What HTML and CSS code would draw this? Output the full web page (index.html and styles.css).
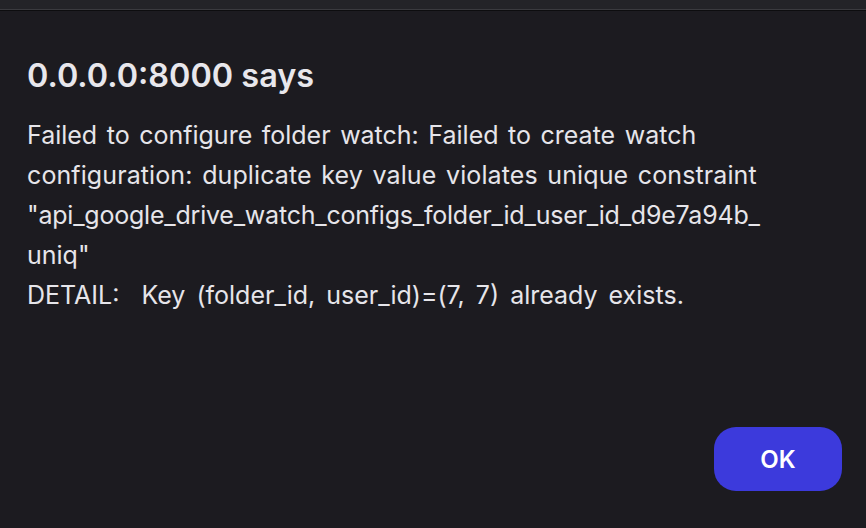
FILE: index.html
```html
<!DOCTYPE html>
<html>
<head>
<meta charset="utf-8">
<link rel="stylesheet" href="styles.css">
</head>
<body>
<div class="topbar"></div>
<div class="dialog">
  <h1 class="title">0.0.0.0:8000 says</h1>
  <p class="message">Failed to configure folder watch: Failed to create watch<br><span class="wide">configuration: duplicate key value violates unique constraint</span><br><span class="ident">"api_google_drive_watch_configs_folder_id_user_id_d9e7a94b_</span><br>uniq"<br><span class="detail">DETAIL:&nbsp; Key (folder_id, user_id)=(7, 7) already exists.</span></p>
  <div class="actions">
    <button class="ok">OK</button>
  </div>
</div>
</body>
</html>
```

FILE: styles.css
```css
html, body {
  margin: 0;
  padding: 0;
  height: 100%;
  background: #1c1b20;
  font-family: Inter, "Noto Sans", sans-serif;
}
body {
  display: flex;
  flex-direction: column;
}
.topbar {
  height: 9px;
  background: #232328;
  border-bottom: 1px solid #3a3a3f;
  box-shadow: 0 1px 0 #0d0d0f;
  flex: none;
}
.dialog {
  flex: 1;
  display: flex;
  flex-direction: column;
  padding: 1px 24px 37px 27px;
  color: #e6e5ea;
}
.title {
  margin: 45px 0 0 0;
  font-size: 32.4px;
  line-height: 40px;
  font-weight: 600;
  color: #e8e7ec;
}
.message {
  margin: 19px 0 0 0;
  font-size: 25px;
  line-height: 40px;
  font-weight: 400;
  white-space: nowrap;
  word-spacing: 2.5px;
}
.wide {
  letter-spacing: 0.1px;
}
.ident {
  letter-spacing: -0.22px;
}
.detail {
  word-spacing: 4px;
}
.actions {
  margin-top: auto;
  display: flex;
  justify-content: flex-end;
}
.ok {
  width: 128px;
  height: 64px;
  border: none;
  border-radius: 22px;
  background: #3c3adc;
  color: #ffffff;
  font-family: Inter, "Noto Sans", sans-serif;
  font-size: 24px;
  font-weight: 600;
}
```
